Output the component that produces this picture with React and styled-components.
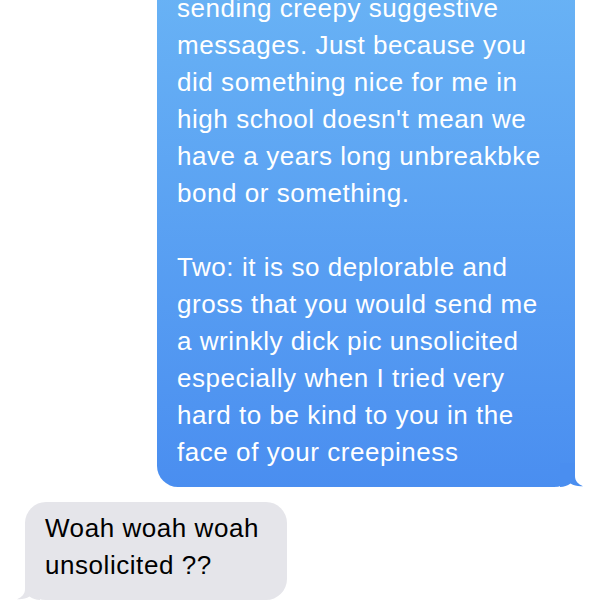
import React from "react";
import styled, { createGlobalStyle } from "styled-components";

const GlobalStyle = createGlobalStyle`
  html, body {
    margin: 0;
    padding: 0;
    background: #fff;
    overflow: hidden;
  }
  body {
    font-family: "Liberation Sans", Arial, sans-serif;
  }
`;

const Screen = styled.div`
  width: 600px;
  height: 600px;
  overflow: hidden;
  background: #fff;
`;

const Thread = styled.div`
  display: flex;
  flex-direction: column;
  gap: 15px;
  padding: 0 25px;
  /* conversation is scrolled, first bubble starts above the fold */
  margin-top: -20px;
`;

const Bubble = styled.div`
  position: relative;
  box-sizing: border-box;
  font-size: 26px;
  line-height: 37px;
  letter-spacing: 0.55px;
  border-radius: 21px;
  align-self: ${(p) => (p.sent ? "flex-end" : "flex-start")};
  color: ${(p) => (p.sent ? "#fff" : "#000")};
  background: ${(p) =>
    p.sent ? "linear-gradient(180deg, #69b3f5 0%, #4a8ef0 100%)" : "#e5e5ea"};
  padding: ${(p) => (p.sent ? "10px 30px 16px 20px" : "8px 28px 16px 20px")};
  width: ${(p) => (p.sent ? "418px" : "auto")};
`;

const Line = styled.div`
  white-space: nowrap;
  min-height: 37px;
`;

const Tail = styled.svg`
  position: absolute;
  bottom: 0;
  width: 24px;
  height: 24px;
  ${(p) => (p.sent ? "right: -9px;" : "left: -9px; transform: scaleX(-1);")}
`;

const BubbleTail = ({ sent, color }) => (
  <Tail sent={sent} viewBox="0 0 24 24">
    <path
      d="M0 0 H15 V13 C15 18 18 21 23 23.2 C18 23.6 14 22.6 10.5 20.5 C7.5 22.6 4 24 0 24 Z"
      fill={color}
    />
  </Tail>
);

const sentLines = [
  "sending creepy suggestive",
  "messages. Just because you",
  "did something nice for me in",
  "high school doesn't mean we",
  "have a years long unbreakbke",
  "bond or something.",
  "",
  "Two: it is so deplorable and",
  "gross that you would send me",
  "a wrinkly dick pic unsolicited",
  "especially when I tried very",
  "hard to be kind to you in the",
  "face of your creepiness",
];

const receivedLines = ["Woah woah woah", "unsolicited ??"];

export default function App() {
  return (
    <Screen>
      <GlobalStyle />
      <Thread>
        <Bubble sent>
          {sentLines.map((l, i) => (
            <Line key={i}>{l}</Line>
          ))}
          <BubbleTail sent color="#4a8ef0" />
        </Bubble>
        <Bubble>
          {receivedLines.map((l, i) => (
            <Line key={i}>{l}</Line>
          ))}
          <BubbleTail color="#e5e5ea" />
        </Bubble>
      </Thread>
    </Screen>
  );
}
